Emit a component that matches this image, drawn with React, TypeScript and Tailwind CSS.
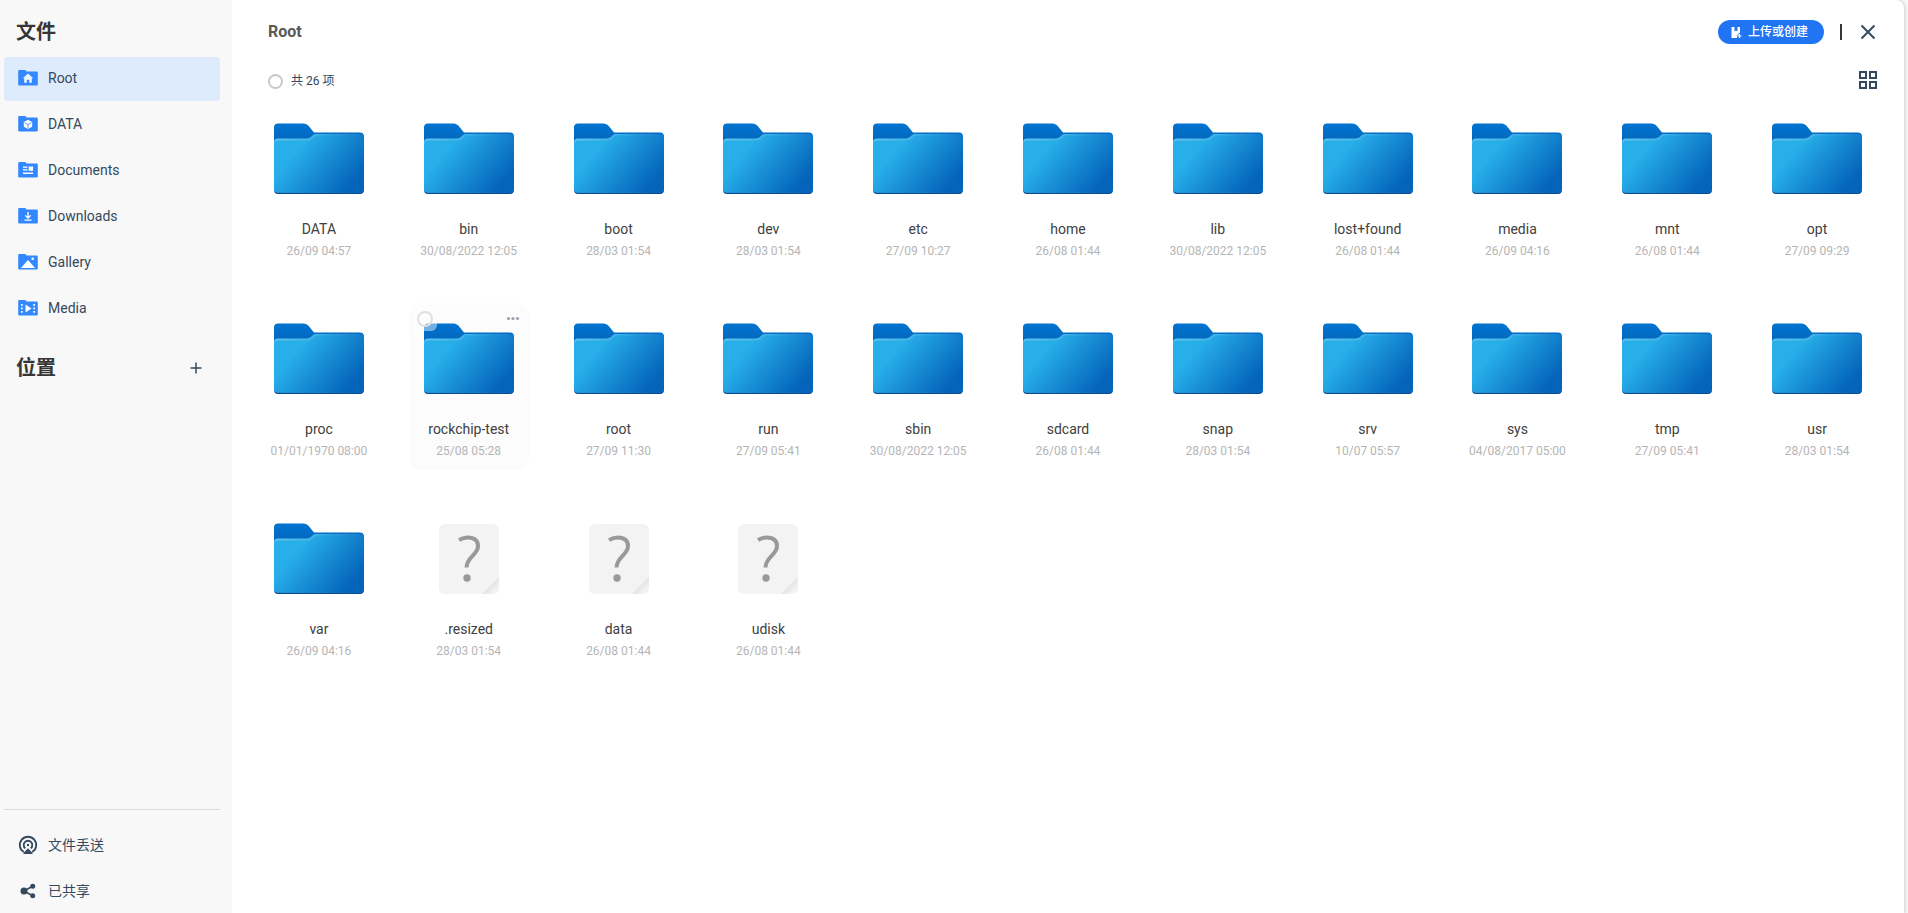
import { useState } from "react";
import type { ReactNode } from "react";

interface Entry {
  name: string;
  date: string;
  type?: "folder" | "file";
}

const entries: Entry[] = [
  { name: "DATA", date: "26/09 04:57" },
  { name: "bin", date: "30/08/2022 12:05" },
  { name: "boot", date: "28/03 01:54" },
  { name: "dev", date: "28/03 01:54" },
  { name: "etc", date: "27/09 10:27" },
  { name: "home", date: "26/08 01:44" },
  { name: "lib", date: "30/08/2022 12:05" },
  { name: "lost+found", date: "26/08 01:44" },
  { name: "media", date: "26/09 04:16" },
  { name: "mnt", date: "26/08 01:44" },
  { name: "opt", date: "27/09 09:29" },
  { name: "proc", date: "01/01/1970 08:00" },
  { name: "rockchip-test", date: "25/08 05:28" },
  { name: "root", date: "27/09 11:30" },
  { name: "run", date: "27/09 05:41" },
  { name: "sbin", date: "30/08/2022 12:05" },
  { name: "sdcard", date: "26/08 01:44" },
  { name: "snap", date: "28/03 01:54" },
  { name: "srv", date: "10/07 05:57" },
  { name: "sys", date: "04/08/2017 05:00" },
  { name: "tmp", date: "27/09 05:41" },
  { name: "usr", date: "28/03 01:54" },
  { name: "var", date: "26/09 04:16" },
  { name: ".resized", date: "28/03 01:54", type: "file" },
  { name: "data", date: "26/08 01:44", type: "file" },
  { name: "udisk", date: "26/08 01:44", type: "file" },
];

// white glyphs drawn on top of the small blue folder
const places: { name: string; glyph: ReactNode }[] = [
  {
    name: "Root",
    glyph: <path d="M10 4.600 4.800 9.300h1.400v4.500h2.600v-3h2.400v3h2.600V9.300h1.400z" fill="#fff" opacity="0.9" />,
  },
  {
    name: "DATA",
    glyph: (
      <>
        <path d="m10 4.700 4.200 2.200v4.900L10 14l-4.200-2.200V6.900z" fill="#fff" />
        <path d="m6.500 7.600 3.500 2 3.500-2M10 9.600v4" stroke="#3388ff" strokeWidth="0.8" fill="none" />
      </>
    ),
  },
  {
    name: "Documents",
    glyph: (
      <path d="M5 5.500h4.500v1.300H5zM5 8.300h4.500v1.300H5zM10.700 5.500H15v4.300h-4.300zM5 11.600h10V13H5z" fill="#fff" />
    ),
  },
  {
    name: "Downloads",
    glyph: <path d="M10 5v6M7.300 8.400l2.700 2.700 2.700-2.700M6.500 13.200h7" stroke="#fff" strokeWidth="1.300" fill="none" />,
  },
  {
    name: "Gallery",
    glyph: (
      <>
        <path d="m3 15 7-8 7 8z" fill="#fff" />
        <circle cx="14.700" cy="5.700" r="1.300" fill="#fff" />
      </>
    ),
  },
  {
    name: "Media",
    glyph: (
      <>
        <path d="M7.500 5.500v8l6-4z" fill="#fff" />
        <path d="M3 5h1.700v1.700H3zM3 8.500h1.700v1.700H3zM3 12h1.700v1.700H3zM15.300 5H17v1.700h-1.700zM15.300 8.500H17v1.700h-1.700zM15.300 12H17v1.700h-1.700z" fill="#fff" />
      </>
    ),
  },
];

function PlaceIcon({ children }: { children: ReactNode }) {
  return (
    <svg className="size-5 shrink-0" viewBox="0 0 20 20" aria-hidden="true">
      <path d="M1.200 2h6l1.500 1.500h10.100a1 1 0 0 1 1 1v12a1 1 0 0 1-1 1H1.200a1 1 0 0 1-1-1V3a1 1 0 0 1 1-1z" fill="#3388ff" />
      <g transform="translate(0 1)">{children}</g>
    </svg>
  );
}

function FolderIcon() {
  return (
    <svg className="h-[72px] w-[90px]" viewBox="0 0 90 72" aria-hidden="true">
      <defs>
        <linearGradient id="folderBack" x1="0" y1="0" x2="0" y2="1">
          <stop offset="0" stopColor="#0074d1" />
          <stop offset="0.3" stopColor="#0565b8" />
          <stop offset="1" stopColor="#084b95" />
        </linearGradient>
        <linearGradient id="folderFront" gradientUnits="userSpaceOnUse" x1="14" y1="18" x2="76" y2="70">
          <stop offset="0.15" stopColor="#28afea" />
          <stop offset="0.95" stopColor="#0464ba" />
        </linearGradient>
        <linearGradient id="folderEdge" x1="0" y1="0" x2="1" y2="0">
          <stop offset="0" stopColor="#5cc4f1" />
          <stop offset="0.5" stopColor="#3fafe6" />
          <stop offset="1" stopColor="#0f79cb" />
        </linearGradient>
      </defs>
      <path d="M4 .5h25c3 0 5 1.500 6.500 3.500l4.500 5.500h46c2.500 0 4 1.500 4 4V67c0 2.500-1.500 4-4 4H4c-2.500 0-4-1.500-4-4V4.500c0-2.500 1.500-4 4-4z" fill="url(#folderBack)" />
      <path d="M4 15.500h28c3 0 4.500-1 6-2.500s2.500-2 4-2h44c2.500 0 4 1 4 3V65.500c0 2.500-1.500 4-4 4H4c-2.500 0-4-1.500-4-4v-46c0-2.500 1.500-4 4-4z" fill="url(#folderEdge)" />
      <path d="M4 17.500h29c3 0 4.500-1 6-2.500s2.500-2.500 4-2.500h43c2.500 0 4 1 4 3V65.500c0 2.500-1.500 4-4 4H4c-2.500 0-4-1.500-4-4v-44c0-2.500 1.500-4 4-4z" fill="url(#folderFront)" />
    </svg>
  );
}

function UnknownFileIcon() {
  return (
    <svg className="h-[72px] w-[90px]" viewBox="0 0 90 72" aria-hidden="true">
      <defs>
        <linearGradient id="fileFold" gradientUnits="userSpaceOnUse" x1="65" y1="61" x2="71" y2="67">
          <stop offset="0" stopColor="#dedede" />
          <stop offset="1" stopColor="#f2f2f2" />
        </linearGradient>
      </defs>
      <path d="M21 1h48a6 6 0 0 1 6 6v47L58 71H21a6 6 0 0 1-6-6V7a6 6 0 0 1 6-6z" fill="#f3f3f3" />
      <path d="M75 54v11a6 6 0 0 1-6 6H58z" fill="url(#fileFold)" />
      <path d="M35 17c3-1.700 6-2.500 9-2.500 6.500 0 10 3.300 10 8.500 0 9-11.500 11-11.500 21.500" stroke="#999" strokeWidth="4" fill="none" />
      <circle cx="43" cy="55" r="3.700" fill="#999" />
    </svg>
  );
}

function FileCard({ entry }: { entry: Entry }) {
  const active = entry.name === "rockchip-test";

  return (
    <li className={`relative flex h-[167px] w-[120px] flex-col items-center rounded-xl pt-5 ${active ? "bg-[#fcfcfc]" : ""}`}>
      {entry.type === "file" ? <UnknownFileIcon /> : <FolderIcon />}
      <p className="mt-6 text-sm leading-5 text-[#404040]">{entry.name}</p>
      <p className="mt-1 text-xs leading-4 whitespace-nowrap text-[#b5b5b5]">{entry.date}</p>
      {active && (
        <>
          <label className="absolute top-1 left-1 flex size-6 items-center justify-center rounded-md bg-white/45">
            <input
              type="checkbox"
              aria-label={entry.name}
              className="size-4 appearance-none rounded-full border-2 border-[#e0e0e0]"
            />
          </label>
          <button type="button" aria-label="More" className="absolute top-1 right-1 flex size-6 items-center justify-center text-[#9aa3ad]">
            <svg className="size-4" viewBox="0 0 16 16" fill="currentColor">
              <circle cx="3.500" cy="7.500" r="1.600" />
              <circle cx="8" cy="7.500" r="1.600" />
              <circle cx="12.500" cy="7.500" r="1.600" />
            </svg>
          </button>
        </>
      )}
    </li>
  );
}

function Sidebar() {
  const [current, setCurrent] = useState("Root");

  return (
    <aside className="flex w-[232px] shrink-0 flex-col bg-[#f8f8f8] pr-3 pl-1">
      <h2 className="mt-[17px] ml-3 text-xl leading-[30px] font-bold text-[#363636]">文件</h2>
      <nav className="mt-2.5 flex flex-col gap-0.5">
        {places.map((place) => (
          <button
            key={place.name}
            type="button"
            onClick={() => setCurrent(place.name)}
            className={`flex h-11 items-center gap-2.5 rounded px-3.5 pb-0.5 text-left text-sm ${current === place.name ? "bg-[#deebfc]" : ""}`}
          >
            <PlaceIcon>{place.glyph}</PlaceIcon>
            {place.name}
          </button>
        ))}
      </nav>
      <div className="mt-[22px] flex items-center justify-between pr-3.5 pl-3">
        <h2 className="text-xl leading-[30px] font-bold text-[#363636]">位置</h2>
        <button type="button" aria-label="Add" className="p-0.5">
          <svg className="size-4" viewBox="0 0 16 16" fill="none" stroke="currentColor" strokeWidth="1.500">
            <path d="M8 2.500v11M2.500 8h11" />
          </svg>
        </button>
      </div>
      <div className="mt-auto flex flex-col gap-0.5 border-t border-[#dbdbdb] pt-[13px]">
        <button type="button" className="flex h-11 items-center gap-2.5 px-3.5 text-sm">
          <svg className="size-5" viewBox="0 0 20 20" fill="none" stroke="currentColor" strokeWidth="1.800" aria-hidden="true">
            <path d="M5.800 17A8.200 8.200 0 1 1 14.200 17" />
            <path d="M7.300 13.400a4.300 4.300 0 1 1 5.400 0" />
            <circle cx="10" cy="10" r="1.200" fill="currentColor" stroke="none" />
            <path d="m10 13.300 4.500 4.700v1h-9v-1z" fill="currentColor" stroke="none" />
          </svg>
          文件丢送
        </button>
        <button type="button" className="flex h-11 items-center gap-2.5 px-3.5 text-sm">
          <svg className="size-5" viewBox="0 0 20 20" fill="currentColor" aria-hidden="true">
            <path d="M6 10 15 5M6 10l9 5" stroke="currentColor" strokeWidth="1.500" />
            <circle cx="6" cy="10" r="3.500" />
            <circle cx="14.700" cy="5.300" r="2.500" />
            <circle cx="14.700" cy="14.700" r="2.500" />
          </svg>
          已共享
        </button>
      </div>
    </aside>
  );
}

export default function App() {
  return (
    <div className="min-h-screen bg-[#f7f7f7] pr-1 font-[Roboto,'Noto_Sans_CJK_SC',sans-serif] text-[#34495e]">
      <div className="flex min-h-screen overflow-hidden rounded-tr-lg bg-white shadow-[0_0_4px_rgba(0,0,0,0.25)]">
        <Sidebar />
        <main className="min-w-0 flex-1">
          <header className="flex items-center justify-between pt-5 pr-[26px] pl-9">
            <h1 className="text-base leading-6 font-bold text-[#595959]">Root</h1>
            <div className="flex items-center">
              <button type="button" className="flex h-6 items-center gap-1 rounded-full bg-[#2175f3] pr-4 pl-2.5 text-xs font-medium text-white">
                <svg className="size-4" viewBox="0 0 16 16" fill="currentColor" aria-hidden="true">
                  <path d="M3.500 3H6.500v4.500l1.500-1 1.500 1V3h2.500v6H10.500v2H9v3H3.500z" />
                  <path d="M11.500 10v4M9.500 12h4" stroke="currentColor" strokeWidth="1.200" />
                </svg>
                上传或创建
              </button>
              <span className="ml-4 h-4 w-0.5 bg-[#363636]" />
              <button type="button" aria-label="Close" className="ml-4">
                <svg className="size-5" viewBox="0 0 20 20" fill="none" stroke="currentColor" strokeWidth="2">
                  <path d="m3.500 3.500 13 13M16.500 3.500l-13 13" />
                </svg>
              </button>
            </div>
          </header>
          <div className="mt-[26px] flex items-center justify-between pr-[26px] pl-9">
            <label className="flex items-center gap-2 pt-0.5 text-xs">
              <input type="checkbox" className="size-[15px] appearance-none rounded-full border-2 border-[#c8c8c8]" />
              共 26 项
            </label>
            <button type="button" aria-label="Grid view">
              <svg className="size-5" viewBox="0 0 20 20" fill="none" stroke="currentColor" strokeWidth="2">
                <path d="M2 2h6v6H2zM12 2h6v6h-6zM2 12h6v6H2zM12 12h6v6h-6z" />
              </svg>
            </button>
          </div>
          <ul className="mt-[13px] grid grid-cols-[repeat(auto-fill,minmax(140px,1fr))] justify-items-center gap-y-[33px] px-3">
            {entries.map((entry) => (
              <FileCard key={entry.name} entry={entry} />
            ))}
          </ul>
        </main>
      </div>
    </div>
  );
}
